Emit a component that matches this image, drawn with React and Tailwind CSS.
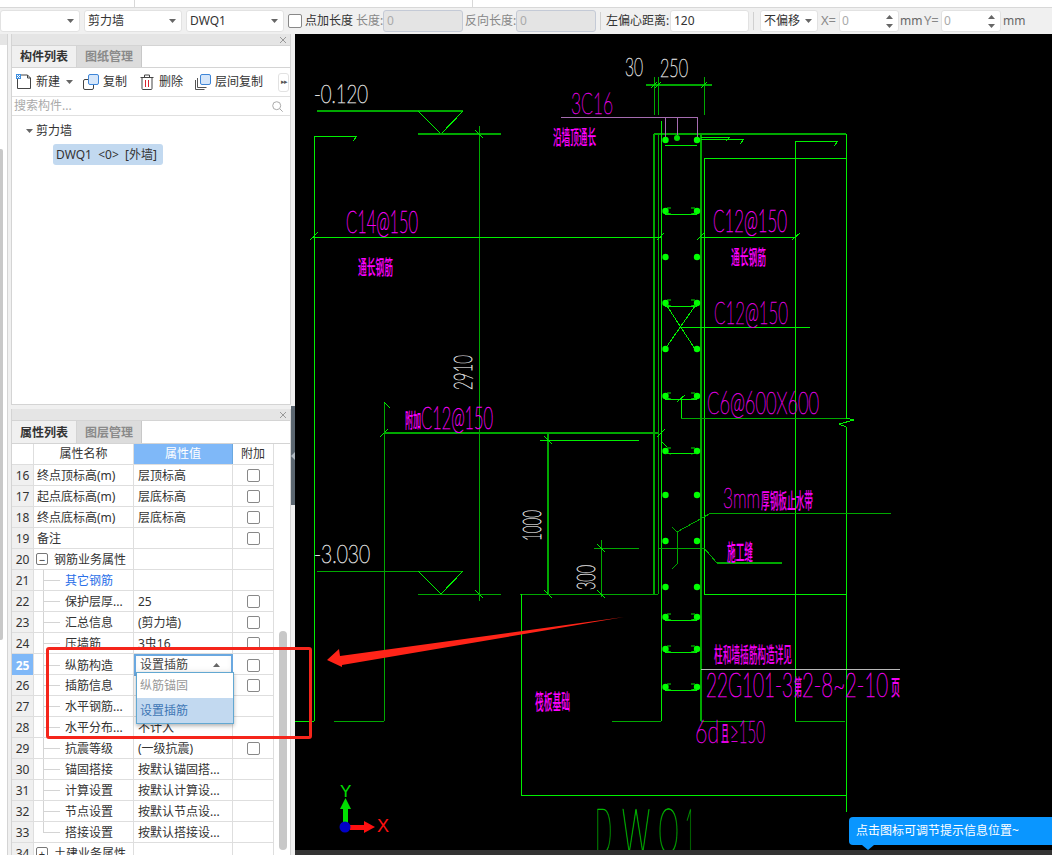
const G = "#00f000";
const D = "#00a800";

const lines = [
  // dims top
  [646, 85, 712, 85, D, 2], [654, 77, 654, 115, D, 1], [658, 77, 658, 115, D, 1], [704, 77, 704, 115, D, 1],
  [651, 88, 657, 82, G, 1], [655, 88, 661, 82, G, 1], [701, 88, 707, 82, G, 1],
  // wall
  [654, 134, 846, 134, D, 2], [654, 134, 654, 594, D, 2], [658, 134, 658, 594, D, 1],
  [661, 121, 661, 721, G, 1], [701, 134, 701, 721, D, 2], [704, 158, 704, 594, G, 1],
  [704, 158, 846, 158, G, 1], [795, 141, 795, 721, G, 1], [795, 141, 838, 141, G, 1], [838, 141, 834, 146, G, 1],
  [846, 134, 846, 418, G, 1], [846, 427, 846, 812, G, 1],
  [681, 418, 846, 418, D, 1], [846, 418, 854, 420, G, 1], [854, 420, 839, 424, G, 1], [839, 424, 846, 427, G, 1],
  [681, 399, 681, 418, G, 1], [677, 402, 685, 395, G, 1],
  // top leaders
  [701, 137, 730, 137, G, 1], [726, 141, 730, 137, G, 1], [701, 139, 744, 139, G, 1], [740, 144, 744, 139, G, 1],
  // left side
  [317, 111, 463, 111, D, 2], [418, 111, 441, 134, G, 1], [441, 134, 463, 111, G, 1], [418, 134, 501, 134, D, 2],
  [479, 126, 479, 601, D, 1], [475, 130, 483, 138, G, 1], [475, 590, 483, 598, G, 1],
  [314, 136, 314, 721, G, 1], [314, 136, 357, 136, G, 1], [357, 136, 353, 141, G, 1],
  [312, 237, 661, 237, G, 1], [310, 240, 318, 232, G, 1], [657, 240, 664, 233, G, 1],
  [701, 237, 796, 237, G, 1], [697, 240, 704, 233, G, 1], [792, 240, 800, 233, G, 1],
  // middle left
  [384, 402, 384, 721, D, 1], [384, 402, 390, 408, G, 1], [380, 437, 388, 429, G, 1],
  [384, 433, 658, 433, D, 2], [657, 437, 665, 429, G, 1],
  [548, 433, 548, 594, D, 2], [540, 440, 639, 440, G, 1], [544, 436, 552, 444, G, 1], [544, 590, 552, 598, G, 1],
  [317, 571, 463, 571, D, 1], [418, 571, 441, 594, G, 1], [441, 594, 463, 571, G, 1], [418, 594, 501, 594, D, 1],
  [520, 594, 658, 594, D, 1], [521, 594, 521, 795, G, 1], [521, 795, 846, 795, G, 1],
  [704, 594, 846, 594, G, 1],
  [601, 540, 601, 597, D, 1], [594, 548, 639, 548, D, 1], [597, 544, 605, 552, G, 1], [597, 590, 605, 598, G, 1],
  [295, 721, 314, 721, G, 1], [334, 721, 384, 721, D, 1],
  [612, 721, 661, 721, D, 1], [701, 721, 750, 721, D, 1], [795, 721, 845, 721, D, 1],
  // right leaders
  [658, 548, 704, 548, D, 1], [704, 548, 717, 563, D, 1], [717, 563, 782, 563, D, 2],
  [677, 532, 711, 513, D, 1], [711, 513, 891, 513, D, 1], [672, 527, 677, 532, D, 1],
  [677, 532, 677, 564, D, 1], [677, 564, 672, 569, D, 1],
  [661, 441, 667, 447, G, 1],
  [667, 306, 695, 349, G, 1], [695, 306, 665, 349, G, 1], [681, 327, 810, 327, G, 1],
  [701, 669, 900, 669, "#b8b8b8", 1],
];

const purple = [[561, 117, 697, 117], [665, 117, 665, 137], [677, 117, 677, 135], [697, 117, 697, 137]];
const dots = [140, 211, 257, 303, 349, 396, 451, 495, 541, 587, 617, 649, 687];
const ties = [145, 214, 306, 399, 453, 620, 652, 690];
const hooked = [211, 303, 396, 451, 617, 649, 687];

function CadText({ x, y, w, size, fill, rotate, cjk, children }) {
  return (
    <text
      x={x}
      y={y}
      textLength={w}
      lengthAdjust="spacingAndGlyphs"
      fontSize={size}
      fill={fill}
      stroke={cjk ? "none" : fill}
      strokeWidth={cjk ? 0 : 0.7}
      fontFamily={cjk ? "'Noto Sans CJK SC', sans-serif" : "Lato, 'Noto Sans CJK SC', sans-serif"}
      fontWeight={cjk ? "500" : "100"}
      transform={rotate ? `rotate(-90 ${x} ${y})` : undefined}
    >
      {children}
    </text>
  );
}

function Drawing() {
  return (
    <svg viewBox="295 34 757 816" className="block w-[757px] h-[816px]">
      {lines.map(([x1, y1, x2, y2, c, w], i) => (
        <line key={i} x1={x1} y1={y1} x2={x2} y2={y2} stroke={c} strokeWidth={w} shapeRendering="crispEdges" />
      ))}
      {purple.map(([x1, y1, x2, y2], i) => (
        <line key={i} x1={x1} y1={y1} x2={x2} y2={y2} stroke="#a56cb0" strokeWidth="1" shapeRendering="crispEdges" />
      ))}
      {dots.map((y) => (
        <g key={y} fill="#00ff00">
          <circle cx="665.5" cy={y} r="3.2" />
          <circle cx="697" cy={y} r="3.2" />
        </g>
      ))}
      <circle cx="677" cy="138" r="3" fill="#00e000" />
      {ties.map((y) => (
        <line key={y} x1="665" y1={y} x2="697" y2={y} stroke={G} strokeWidth="1" shapeRendering="crispEdges" />
      ))}
      {hooked.map((y) => (
        <path key={y} d={`M671 ${y - 3}h-4M691 ${y - 3}h4M671 ${y + 3}l-5 -1M691 ${y + 3}l5 -1`} stroke="#00e000" fill="none" />
      ))}

      <CadText x={314} y={103} w={54} size={25} fill="#e0e0e0">-0.120</CadText>
      <CadText x={314} y={563} w={56} size={25} fill="#e0e0e0">-3.030</CadText>
      <CadText x={625} y={76} w={18} size={26} fill="#e0e0e0">30</CadText>
      <CadText x={660} y={77} w={28} size={26} fill="#e0e0e0">250</CadText>
      <CadText x={472} y={390} w={35} size={25} fill="#e0e0e0" rotate>2910</CadText>
      <CadText x={541} y={541} w={31} size={26} fill="#e0e0e0" rotate>1000</CadText>
      <CadText x={595} y={590} w={25} size={26} fill="#e0e0e0" rotate>300</CadText>

      <CadText x={571} y={114} w={42} size={30} fill="#d800d8">3C16</CadText>
      <CadText x={553} y={145} w={43} size={20} fill="#ff00ff" cjk>沿墙顶通长</CadText>
      <CadText x={346} y={233} w={72} size={32} fill="#f000f0">C14@150</CadText>
      <CadText x={358} y={275} w={35} size={20} fill="#ff00ff" cjk>通长钢筋</CadText>
      <CadText x={713} y={232} w={74} size={32} fill="#e800e8">C12@150</CadText>
      <CadText x={731} y={265} w={35} size={20} fill="#ff00ff" cjk>通长钢筋</CadText>
      <CadText x={714} y={324} w={74} size={32} fill="#d800d8">C12@150</CadText>
      <CadText x={707} y={414} w={112} size={31} fill="#d800d8">C6@600X600</CadText>
      <CadText x={405} y={428} w={16} size={20} fill="#ff00ff" cjk>附加</CadText>
      <CadText x={421} y={429} w={72} size={32} fill="#f000f0">C12@150</CadText>
      <CadText x={723} y={508} w={37} size={28} fill="#d800d8">3mm</CadText>
      <CadText x={761} y={508} w={52} size={21} fill="#f000f0" cjk>厚钢板止水带</CadText>
      <CadText x={727} y={560} w={26} size={22} fill="#ff00ff" cjk>施工缝</CadText>
      <CadText x={714} y={662} w={78} size={21} fill="#f000f0" cjk>柱和墙插筋构造详见</CadText>
      <CadText x={706} y={697} w={87} size={33} fill="#e800e8">22G101-3</CadText>
      <CadText x={794} y={695} w={8} size={22} fill="#f000f0" cjk>第</CadText>
      <CadText x={802} y={697} w={86} size={33} fill="#e800e8">2-8~2-10</CadText>
      <CadText x={891} y={695} w={9} size={22} fill="#f000f0" cjk>页</CadText>
      <CadText x={695} y={743} w={24} size={31} fill="#d800d8">6d</CadText>
      <CadText x={721} y={741} w={8} size={22} fill="#e000e0" cjk>且</CadText>
      <CadText x={730} y={743} w={35} size={31} fill="#d800d8">≥150</CadText>
      <CadText x={535} y={709} w={35} size={21} fill="#ff00ff" cjk>筏板基础</CadText>
      <CadText x={595} y={853} w={17} size={62} fill="#00b800">D</CadText>
      <CadText x={622} y={853} w={28} size={62} fill="#00d000">W</CadText>
      <CadText x={658} y={853} w={21} size={62} fill="#00b800">Q</CadText>
      <CadText x={685} y={853} w={10} size={62} fill="#00b800">1</CadText>

      {/* red arrow */}
      <polygon points="327,660 339,649 340,656 624,617 342,665 342,667" fill="#ff2418" />

      {/* axes */}
      <rect x="343" y="808" width="5" height="19" fill="#00e000" />
      <polygon points="345.5,798 351,809 340,809" fill="#00e000" />
      <rect x="350" y="825" width="15" height="5" fill="#ff1010" />
      <polygon points="375,827 364,821 364,833" fill="#ff1010" />
      <circle cx="345" cy="827" r="5.5" fill="#0000c8" />
      <text x="377" y="832" fontSize="18" fill="#ff1010" fontFamily="'Liberation Sans', sans-serif">X</text>
      <text x="340" y="797" fontSize="17" fill="#00e000" fontFamily="'Liberation Sans', sans-serif">Y</text>
    </svg>
  );
}

function Caret({ up }) {
  return (
    <svg width="7" height="4" viewBox="0 0 7 4" className="block shrink-0">
      <polygon points={up ? "3.5,0 7,4 0,4" : "0,0 7,0 3.5,4"} fill="#666" />
    </svg>
  );
}

function Select({ w, children }) {
  return (
    <div className={`${w} h-[22px] shrink-0 flex items-center justify-between pl-[3px] pr-[5px] bg-white border border-[#e2e2e2] rounded-[3px] text-[#333]`}>
      <span>{children}</span>
      <Caret />
    </div>
  );
}

function Spin() {
  return (
    <div className="w-[60px] h-[22px] shrink-0 flex items-center justify-between pl-[2px] pr-[5px] bg-white border border-[#e2e2e2] rounded-[3px] text-[#aaa]">
      <span>0</span>
      <span className="flex flex-col gap-[5px]">
        <Caret up />
        <Caret />
      </span>
    </div>
  );
}

function Toolbar() {
  return (
    <div className="h-[26px] shrink-0 flex items-center bg-[#f0f0f0] text-[12px]">
      <Select w="w-[80px]"></Select>
      <div className="w-[4px] shrink-0" />
      <Select w="w-[98px]">剪力墙</Select>
      <div className="w-[4px] shrink-0" />
      <Select w="w-[98px]">DWQ1</Select>
      <div className="ml-[4px] w-[14px] h-[14px] shrink-0 bg-white border border-[#888] rounded-[2px]" />
      <span className="ml-[3px] w-[49px] shrink-0 text-[#333]">点加长度</span>
      <span className="ml-[2px] w-[27px] shrink-0 text-[#888] whitespace-nowrap">长度:</span>
      <div className="w-[80px] h-[22px] shrink-0 pl-[3px] leading-[20px] bg-[#e4e4e4] border border-[#c4cad6] rounded-[3px] text-[#aaa]">0</div>
      <span className="ml-[2px] w-[51px] shrink-0 text-[#888] whitespace-nowrap">反向长度:</span>
      <div className="w-[80px] h-[22px] shrink-0 pl-[3px] leading-[20px] bg-[#e4e4e4] border border-[#c4cad6] rounded-[3px] text-[#aaa]">0</div>
      <div className="ml-[4px] w-px h-[18px] shrink-0 bg-[#d0d0d0]" />
      <span className="ml-[5px] w-[64px] shrink-0 text-[#333] whitespace-nowrap">左偏心距离:</span>
      <div className="w-[79px] h-[22px] shrink-0 pl-[3px] leading-[20px] bg-white border border-[#e2e2e2] rounded-[3px] text-[#333]">120</div>
      <div className="ml-[4px] w-px h-[18px] shrink-0 bg-[#d0d0d0]" />
      <div className="w-[6px] shrink-0" />
      <Select w="w-[58px]">不偏移</Select>
      <span className="ml-[3px] w-[18px] shrink-0 text-[13px] text-[#888]">X=</span>
      <Spin />
      <span className="ml-[1px] w-[24px] shrink-0 text-[#666]">mm</span>
      <span className="w-[17px] shrink-0 text-[13px] text-[#888]">Y=</span>
      <Spin />
      <span className="ml-[2px] text-[#666]">mm</span>
    </div>
  );
}

function PanelHead() {
  return (
    <div className="h-[11px] shrink-0 flex items-center justify-end pr-[3px] bg-[#e5e5e5]">
      <svg width="8" height="8" viewBox="0 0 8 8">
        <path d="M1 1l6 6M7 1l-6 6" stroke="#999" fill="none" />
      </svg>
    </div>
  );
}

function Tabs({ first, second, h }) {
  return (
    <div className={`${h} shrink-0 flex border-y border-[#d4d4d4] bg-white text-[12px] font-bold`}>
      <div className="w-[65px] pt-px flex items-center justify-center bg-[#f0f0f0] text-[#333] border-r border-[#d4d4d4]">{first}</div>
      <div className="w-[65px] pt-px flex items-center justify-center bg-[#dcdcdc] text-[#8a8a8a] border-r border-[#c8c8c8]">{second}</div>
    </div>
  );
}

function NewIcon() {
  return (
    <svg width="16" height="16" viewBox="0 0 16 16" className="shrink-0">
      <path d="M1.5 5v9.5h13V4l-3-3H5" fill="#fff" stroke="#444" />
      <path d="M11.5 1v3h3" fill="none" stroke="#444" />
      <rect x="0" y="0" width="5" height="5" fill="#3f8fe0" />
      <path d="M1 1h1v1H1zM3 1h1v1H3zM2 2h1v1H2zM1 3h1v1H1zM3 3h1v1H3z" fill="#fff" />
    </svg>
  );
}

function CopyIcon() {
  return (
    <svg width="16" height="16" viewBox="0 0 16 16" className="block">
      <rect x="0.5" y="5.5" width="10" height="10" rx="1.5" fill="#fff" stroke="#444" />
      <rect x="5.5" y="0.5" width="10" height="10" rx="1.5" fill="#d5e6fa" stroke="#3f86d8" />
    </svg>
  );
}

function TrashIcon() {
  return (
    <svg width="14" height="16" viewBox="0 0 14 16" className="block">
      <path d="M2 4v10.5q0 1 1 1h8q1 0 1-1V4M0.5 3.5h13M4.5 3.5V1h5v2.5" fill="none" stroke="#444" />
      <path d="M5.5 6v7M8.5 6v7" stroke="#d9232e" />
    </svg>
  );
}

function LayerIcon() {
  return (
    <svg width="16" height="16" viewBox="0 0 16 16" className="block">
      <path d="M0.5 6v9.5h9M2.5 4v9.5h9" fill="none" stroke="#555" />
      <rect x="5.5" y="0.5" width="10" height="10" rx="1.5" fill="#d5e6fa" stroke="#3f86d8" />
    </svg>
  );
}

function ComponentPanel() {
  return (
    <div className="h-[371px] shrink-0 flex flex-col bg-white border-x border-b border-[#d4d4d4]">
      <PanelHead />
      <Tabs first="构件列表" second="图纸管理" h="h-[23px]" />
      <div className="h-[29px] shrink-0 flex items-center pl-[4px] border-b border-[#e0e0e0] text-[12px] text-[#333] whitespace-nowrap">
        <NewIcon />
        <span className="ml-[4px]">新建</span>
        <span className="ml-[6px]"><Caret /></span>
        <span className="ml-[10px]"><CopyIcon /></span>
        <span className="ml-[4px]">复制</span>
        <span className="ml-[13px]"><TrashIcon /></span>
        <span className="ml-[5px]">删除</span>
        <span className="ml-[12px]"><LayerIcon /></span>
        <span className="ml-[4px]">层间复制</span>
        <span className="ml-[15px] w-[11px] h-[19px] flex items-center justify-center bg-white border border-[#e2e2e2] rounded-[3px] text-[7px] text-[#555] tracking-[-1px]">▸▸</span>
      </div>
      <div className="h-[19px] shrink-0 flex items-center justify-between pl-[2px] pr-[7px] border-b border-[#e0e0e0] text-[12px] text-[#aaa]">
        <span>搜索构件...</span>
        <svg width="11" height="11" viewBox="0 0 11 11">
          <circle cx="4.7" cy="4.7" r="4" fill="none" stroke="#aaa" />
          <path d="M7.7 7.7l3 3" stroke="#aaa" />
        </svg>
      </div>
      <div className="pt-[6px] pl-[14px] text-[12px] text-[#333]">
        <div className="h-[18px] flex items-center gap-[3px]">
          <Caret />
          <span>剪力墙</span>
        </div>
        <div className="ml-[27px] mt-[4px] w-[110px] h-[21px] flex items-center pl-[3px] bg-[#c2d9f0] rounded-[3px] whitespace-pre">DWQ1  {"<0>"}  [外墙]</div>
      </div>
    </div>
  );
}

const rows = [
  { n: 16, name: "终点顶标高(m)", value: "层顶标高", check: true },
  { n: 17, name: "起点底标高(m)", value: "层底标高", check: true },
  { n: 18, name: "终点底标高(m)", value: "层底标高", check: true },
  { n: 19, name: "备注", check: true },
  { n: 20, name: "钢筋业务属性", box: "−" },
  { n: 21, name: "其它钢筋", tree: true, link: true },
  { n: 22, name: "保护层厚...", value: "25", tree: true, check: true },
  { n: 23, name: "汇总信息", value: "(剪力墙)", tree: true, check: true },
  { n: 24, name: "压墙筋", value: "3虫16", tree: true, check: true },
  { n: 25, name: "纵筋构造", tree: true, check: true, active: true },
  { n: 26, name: "插筋信息", tree: true, check: true },
  { n: 27, name: "水平钢筋...", tree: true },
  { n: 28, name: "水平分布...", value: "不计入", tree: true },
  { n: 29, name: "抗震等级", value: "(一级抗震)", tree: true, check: true },
  { n: 30, name: "锚固搭接", value: "按默认锚固搭...", tree: true },
  { n: 31, name: "计算设置", value: "按默认计算设...", tree: true },
  { n: 32, name: "节点设置", value: "按默认节点设...", tree: true },
  { n: 33, name: "搭接设置", value: "按默认搭接设...", tree: true, last: true },
  { n: 34, name: "土建业务属性", box: "+" },
];

function Row({ row }) {
  return (
    <div className="h-[21px] shrink-0 grid grid-cols-[22px_100px_99px_41px] border-b border-[#dedede] text-[12px] text-[#333]">
      <div className={row.active
        ? "pt-px flex items-center justify-center bg-[#7fb8f8] text-white font-bold border-r border-[#dedede]"
        : "pt-px flex items-center justify-center bg-[#f0f0f0] border-r border-[#dedede]"}>{row.n}</div>
      <div className="flex items-center border-r border-[#dedede] whitespace-nowrap">
        {row.tree && (
          <span className={row.last ? "ml-[9px] w-[22px] h-[11px] self-start shrink-0 flex items-end border-l border-[#d4d4d4]" : "ml-[9px] w-[22px] h-full shrink-0 flex items-center border-l border-[#d4d4d4]"}>
            <span className="w-[16px] h-px bg-[#d4d4d4]" />
          </span>
        )}
        {row.box && (
          <span className="ml-[2px] mr-[6px] w-[12px] h-[12px] flex items-center justify-center bg-white border border-[#777] rounded-[2px] text-[11px] leading-none">{row.box}</span>
        )}
        {!row.tree && !row.box && <span className="w-[3px]" />}
        <span className={row.link ? "pt-px text-[#2a6fe8]" : "pt-px"}>{row.name}</span>
      </div>
      {row.active ? (
        <div className="flex items-center justify-between pl-[4px] pr-[11px] bg-white border-2 border-[#6aa8e0] text-[#444] shadow-[inset_0_-4px_5px_rgba(0,0,0,0.05)]">
          <span>设置插筋</span>
          <Caret up />
        </div>
      ) : (
        <div className="pt-px flex items-center pl-[4px] border-r border-[#dedede] whitespace-nowrap">{row.value}</div>
      )}
      <div className="flex items-center justify-center border-r border-[#dedede]">
        {row.check && <span className="w-[13px] h-[13px] bg-white border border-[#888] rounded-[2px]" />}
      </div>
    </div>
  );
}

function PropertyPanel() {
  return (
    <div className="flex-1 min-h-0 flex flex-col bg-white border-x border-[#d4d4d4] overflow-hidden">
      <PanelHead />
      <Tabs first="属性列表" second="图层管理" h="h-[24px]" />
      <div className="relative flex-1 min-h-0 flex">
        <div className="w-[262px] shrink-0 flex flex-col">
          <div className="h-[21px] shrink-0 grid grid-cols-[22px_100px_99px_41px] border-b border-[#dedede] text-[12px] text-[#333]">
            <div className="border-r border-[#dedede]" />
            <div className="flex items-center justify-center border-r border-[#dedede]">属性名称</div>
            <div className="flex items-center justify-center bg-[#7fb8f8] text-white border-r border-[#6aa8e0]">属性值</div>
            <div className="flex items-center justify-center border-r border-[#dedede]">附加</div>
          </div>
          {rows.map((row) => (
            <Row key={row.n} row={row} />
          ))}
        </div>
        <div className="ml-[5px] mt-[187px] mb-[5px] w-[8px] bg-[#c8c8c8] rounded-[4px]" />
        {/* open dropdown of row 25 */}
        <div className="absolute left-[124px] top-[228px] w-[98px] h-[52px] flex flex-col bg-white border border-[#62a8d2] shadow-[0_2px_4px_rgba(0,0,0,0.3)] text-[12px]">
          <div className="h-[25px] flex items-center pl-[3px] text-[#999]">纵筋锚固</div>
          <div className="h-[25px] flex items-center pl-[3px] bg-[#c2d9f0] text-[#3f77b5]">设置插筋</div>
        </div>
      </div>
    </div>
  );
}

export default function App() {
  return (
    <div className="relative w-[1052px] h-[855px] flex flex-col overflow-hidden bg-[#f0f0f0] font-['Noto_Sans','Noto_Sans_CJK_SC',sans-serif]">
      <div className="h-[8px] shrink-0 flex bg-white border-b border-[#d8d8d8] overflow-hidden text-[12px] font-bold text-[#333]">
        <span className="ml-[48px] -mt-[15px] w-[87px] border-r border-[#d8d8d8] h-[30px]">工程设置</span>
        <span className="ml-[147px] -mt-[15px]">工程设置</span>
        <span className="ml-[142px] w-px h-[8px] bg-[#d8d8d8]" />
      </div>
      <Toolbar />
      <div className="flex-1 min-h-0 flex">
        <div className="w-[8px] shrink-0 flex flex-col bg-white border-r border-[#d4d4d4]">
          <div className="h-[11px] shrink-0 bg-[#e5e5e5]" />
          <div className="mt-[104px] w-[3px] h-[491px] bg-[#c8c8c8] rounded-r-[2px]" />
        </div>
        <div className="ml-[3px] w-[280px] shrink-0 flex flex-col gap-[4px]">
          <ComponentPanel />
          <PropertyPanel />
        </div>
        <div className="w-[4px] shrink-0 pt-[372px]">
          <div className="h-[99px] flex items-center bg-[#5b6670]">
            <svg width="4" height="8" viewBox="0 0 4 8">
              <polygon points="4,0 4,8 0,4" fill="#b0b8c0" />
            </svg>
          </div>
        </div>
        <div className="flex-1 min-w-0 flex flex-col bg-black">
          <div className="flex-1 min-h-0">
            <Drawing />
          </div>
          <div className="h-[5px] shrink-0 bg-[#333]" />
        </div>
      </div>

      {/* red annotation box */}
      <div className="absolute left-[46px] top-[647px] w-[266px] h-[92px] border-[3px] border-[#f5251b] rounded-[3px]" />

      {/* hint bubble */}
      <div className="absolute left-[849px] top-[817px] w-[203px] h-[28px] flex items-center pl-[7px] bg-[#0a96ff] rounded-l-[4px] text-[12px] text-white whitespace-nowrap">
        点击图标可调节提示信息位置~
        <span className="absolute left-[13px] top-[28px] w-0 h-0 border-x-[6px] border-x-transparent border-t-[5px] border-t-[#0a96ff]" />
      </div>
    </div>
  );
}
